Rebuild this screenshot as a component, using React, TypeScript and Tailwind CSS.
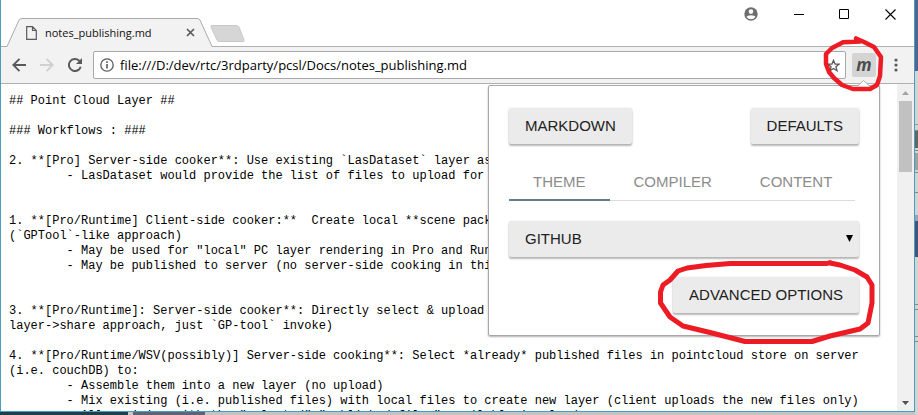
import React from "react";

const notes = `## Point Cloud Layer ##

### Workflows : ###

2. **[Pro] Server-side cooker**: Use existing \`LasDataset\` layer as
        - LasDataset would provide the list of files to upload for


1. **[Pro/Runtime] Client-side cooker:**  Create local **scene pack
(\`GPTool\`-like approach)
        - May be used for "local" PC layer rendering in Pro and Run
        - May be published to server (no server-side cooking in thi


3. **[Pro/Runtime]: Server-side cooker**: Directly select & upload
layer->share approach, just \`GP-tool\` invoke)

4. **[Pro/Runtime/WSV(possibly)] Server-side cooking**: Select *already* published files in pointcloud store on server
(i.e. couchDB) to:
        - Assemble them into a new layer (no upload)
        - Mix existing (i.e. published files) with local files to create new layer (client uploads the new files only)
        - Allow mixing with the "selected" "published files" available in cloud`;

const desktopBands: [string, string][] = [
  ["h-[71px]", "bg-[#53648a]"],
  ["h-[53px]", "bg-[#d3d3d3]"],
  ["h-px", "bg-[#9a9a9a]"],
  ["h-[5px]", "bg-[#d3d3d3]"],
  ["h-px", "bg-[#8a8a8a]"],
  ["h-[17px]", "bg-[#646464]"],
  ["h-[2px]", "bg-[#d3d3d3]"],
  ["h-px", "bg-[#8a8a8a]"],
  ["h-[2px]", "bg-[#d3d3d3]"],
  ["h-[17px]", "bg-[#a0a0a0]"],
  ["h-[2px]", "bg-[#d3d3d3]"],
  ["h-px", "bg-[#8a8a8a]"],
  ["h-[19px]", "bg-[#d3d3d3]"],
  ["h-px", "bg-[#8a8a8a]"],
  ["h-[22px]", "bg-[#d3d3d3]"],
  ["h-[6px]", "bg-[#9ba2b3]"],
  ["h-[36px]", "bg-[#445578]"],
  ["h-[47px]", "bg-[#d3d3d3]"],
  ["h-px", "bg-[#8a8a8a]"],
  ["h-[4px]", "bg-[#d3d3d3]"],
  ["h-px", "bg-[#8a8a8a]"],
  ["h-[26px]", "bg-[#d3d3d3]"],
  ["h-px", "bg-[#8a8a8a]"],
  ["h-[4px]", "bg-[#d3d3d3]"],
  ["h-px", "bg-[#8a8a8a]"],
];

const raised =
  "h-9 rounded-[2px] bg-[#ebebeb] px-4 text-[15px] leading-9 text-[#212121] shadow-[0_0_2px_rgba(0,0,0,0.12),0_2px_2px_rgba(0,0,0,0.28)]";

function TitleBar() {
  return (
    <header className="flex h-[46px] shrink-0 justify-between bg-white">
      <div className="flex items-end">
        <div className="relative z-10 -mb-px ml-[5px] h-[29px] w-[208px]">
          <svg className="absolute inset-0" width="208" height="29" viewBox="0 0 208 29" fill="none">
            <path d="M0 29 1 28.5 13 2Q14 .5 16 .5H191Q193 .5 194 2L206 28.5 208 29Z" fill="#f2f2f2" />
            <path d="M0 28.5H1L13 2Q14 .5 16 .5H191Q193 .5 194 2L206 28.5H208" stroke="#aaa" />
          </svg>
          <div className="relative flex h-[29px] items-center pl-5 pr-[18px]">
            <svg width="11" height="14" viewBox="0 0 11 14" fill="none" stroke="#5a5a5a" strokeWidth="1.2">
              <path d="M.7.7H6.5L10.3 4.5V13.3H.7ZM6.5.7V4.5H10.3" />
            </svg>
            <span className="ml-2 flex-1 font-['Open_Sans',sans-serif] text-[11px] leading-4 text-[#111]">notes_publishing.md</span>
            <button aria-label="Close tab" className="flex size-3 items-center justify-center">
              <svg width="9" height="9" viewBox="0 0 9 9" stroke="#5a5a5a" strokeWidth="1.7">
                <path d="M1 1 8 8M8 1 1 8" />
              </svg>
            </button>
          </div>
        </div>
        <button aria-label="New tab" className="mb-1 -ml-[4px]">
          <svg width="35" height="17" viewBox="0 0 35 17">
            <path d="M2 .5H26Q28 .5 29 2L34 15Q34.500 16.500 33 16.500H9Q7.500 16.500 7 15L1 2Q.5.5 2 .5Z" fill="#d6d6d6" stroke="#c8c8c8" />
          </svg>
        </button>
      </div>
      <div className="flex h-7 items-center">
        <button aria-label="Profile" className="mr-9">
          <svg width="14" height="14" viewBox="0 0 14 14">
            <circle cx="7" cy="7" r="6.700" fill="#6e6e6e" />
            <circle cx="7" cy="4.600" r="2.300" fill="#fff" />
            <path d="M2.600 10Q3 8.200 7 8.200T11.400 10Q9.800 12.300 7 12.300T2.600 10Z" fill="#fff" />
          </svg>
        </button>
        <button aria-label="Minimize" className="mr-[35px]">
          <svg width="10" height="10" viewBox="0 0 10 10" stroke="#000"><path d="M0 5.500H10" /></svg>
        </button>
        <button aria-label="Maximize" className="mr-9">
          <svg width="10" height="10" viewBox="0 0 10 10" fill="none" stroke="#000"><path d="M.5.5H9.500V9.500H.5Z" /></svg>
        </button>
        <button aria-label="Close" className="mr-[18px]">
          <svg width="11" height="11" viewBox="0 0 11 11" stroke="#000" strokeWidth="1.100"><path d="M.5.5 10.500 10.500M10.500.5.5 10.500" /></svg>
        </button>
      </div>
    </header>
  );
}

function Toolbar() {
  return (
    <nav className="flex h-[38px] shrink-0 items-center border-y border-[#b0b0b0] bg-[#f2f2f2] pl-[11px] pr-4">
      <button aria-label="Back" className="mr-[14px]">
        <svg width="14" height="14" viewBox="0 0 14 14" fill="none" stroke="#5a5a5a" strokeWidth="1.900"><path d="M14 7H1.500M7.500.8 1.300 7 7.500 13.200" /></svg>
      </button>
      <button aria-label="Forward" className="mr-[14px]">
        <svg width="14" height="14" viewBox="0 0 14 14" fill="none" stroke="#d0d0d0" strokeWidth="1.900"><path d="M0 7H12.500M6.500.8 12.700 7 6.500 13.200" /></svg>
      </button>
      <button aria-label="Reload" className="mr-[11px]">
        <svg width="14" height="14" viewBox="0 0 14 14" fill="none" stroke="#5a5a5a" strokeWidth="2"><path d="M12.700 8.700A6 6 0 1 1 11.200 2.800L12.500 4" /><path d="M14 0V6H8Z" fill="#5a5a5a" stroke="none" /></svg>
      </button>
      <div className="flex h-7 flex-1 items-center rounded-[2px] border border-[#a9a9a9] bg-white pl-[6px] pr-[5px]">
        <svg width="14" height="14" viewBox="0 0 14 14" fill="none" stroke="#5a5a5a">
          <circle cx="7" cy="7" r="6.200" strokeWidth="1.300" />
          <path d="M7 6V10.500M7 3.300V4.900" strokeWidth="1.600" />
        </svg>
        <input
          aria-label="Address"
          defaultValue="file:///D:/dev/rtc/3rdparty/pcsl/Docs/notes_publishing.md"
          className="ml-[6px] min-w-0 flex-1 bg-transparent font-['Open_Sans',sans-serif] text-[13px] leading-5 text-black outline-none"
        />
        <button aria-label="Bookmark this page">
          <svg width="13" height="13" viewBox="0 0 13 13" fill="none" stroke="#5a5a5a" strokeWidth="1.300">
            <path d="M6.500 1.300 8 5 12 5.200 8.900 7.700 10 11.700 6.500 9.500 3 11.700 4.100 7.700 1 5.200 5 5Z" />
          </svg>
        </button>
      </div>
      <button aria-label="Markdown Viewer" className="ml-[6px] h-6 w-6 rounded-[2px] bg-[#d4d4d4] text-center font-['Open_Sans',sans-serif] text-[17px] font-bold italic leading-5 text-[#4c4c4c]">
        m
      </button>
      <button aria-label="Menu" className="ml-[18px]">
        <svg width="4" height="14" viewBox="0 0 4 14" fill="#5a5a5a"><circle cx="2" cy="2" r="1.600" /><circle cx="2" cy="7" r="1.600" /><circle cx="2" cy="12" r="1.600" /></svg>
      </button>
    </nav>
  );
}

function Popup() {
  return (
    <section className="absolute right-[34px] top-px w-[392px] rounded-[2px] border border-[#a8a8a8] bg-white px-5 pb-[22px] pt-[22px] font-['Liberation_Sans',Arial,sans-serif] shadow-[0_1px_2px_rgba(0,0,0,0.3)]">
      <svg className="absolute -top-[6px] right-[9px]" width="13" height="7" viewBox="0 0 13 7">
        <path d="M0 7 6.500.5 13 7Z" fill="#fff" />
        <path d="M.5 6 6.500.5 12.500 6" fill="none" stroke="#b0b0b0" />
      </svg>
      <div className="flex justify-between">
        <button className={raised}>MARKDOWN</button>
        <button className={raised}>DEFAULTS</button>
      </div>
      <div role="tablist" className="mr-1 mt-5 flex h-[37px] border-b border-[#dcdcdc] text-[15px] leading-9 text-[#8c8c8c]">
        <button role="tab" aria-selected="true" className="h-[37px] border-b-2 border-[#607d8b] px-6">THEME</button>
        <button role="tab" aria-selected="false" className="px-6">COMPILER</button>
        <button role="tab" aria-selected="false" className="px-6">CONTENT</button>
      </div>
      <div className="relative mt-5">
        <select aria-label="Theme" className={"w-full appearance-none outline-none " + raised}>
          <option>GITHUB</option>
        </select>
        <svg className="pointer-events-none absolute right-[6px] top-[14px]" width="7" height="7" viewBox="0 0 7 7"><path d="M0 0H7L3.500 7Z" /></svg>
      </div>
      <div className="mt-5 flex justify-end">
        <button className={raised}>ADVANCED OPTIONS</button>
      </div>
    </section>
  );
}

function Scrollbar() {
  return (
    <div className="flex w-[17px] shrink-0 flex-col items-center bg-[#f0f0f0]">
      <svg className="shrink-0" width="17" height="17" viewBox="0 0 17 17"><path d="M5 11 8.500 7 12 11Z" fill="#a3a3a3" /></svg>
      <div className="h-[71px] w-[13px] bg-[#c1c1c1]" />
      <svg className="mt-auto shrink-0" width="17" height="17" viewBox="0 0 17 17"><path d="M5 7 8.500 11 12 7Z" fill="#505050" /></svg>
    </div>
  );
}

export default function App() {
  return (
    <div className="relative flex h-screen w-full overflow-hidden bg-[#d3d3d3]">
      <div className="flex min-w-0 flex-1 flex-col">
        <main className="flex min-h-0 flex-1 flex-col border-x border-b border-[#479fbd] bg-white">
          <TitleBar />
          <Toolbar />
          <div className="relative flex min-h-0 flex-1">
            <div className="flex min-w-0 flex-1 flex-col items-start overflow-hidden px-2 pt-[10px] font-['Liberation_Mono',monospace] text-[12px] leading-[15px] text-black">
              {notes.split("\n").map((line, i) => (
                <pre key={i} className="h-[15px] shrink-0 font-[inherit]">{line}</pre>
              ))}
            </div>
            <Scrollbar />
            <Popup />
          </div>
        </main>
        <div className="flex h-[3px] shrink-0">
          <div className="w-32 bg-[#1c3f4c]" />
          <div className="w-[5px] bg-[#c8c8c8]" />
          <div className="w-[72px] bg-[#5d6478]" />
          <div className="flex-1 bg-[#c4c4c4]" />
        </div>
      </div>
      <div className="w-[3px] shrink-0 overflow-hidden">
        {desktopBands.map(([height, color], i) => (
          <div key={i} className={height + " " + color} />
        ))}
      </div>
      <svg className="pointer-events-none absolute right-0 top-0" width="268" height="415" viewBox="650 0 268 415" fill="none" stroke="#ed1c24" strokeLinecap="round" strokeLinejoin="round">
        <path strokeWidth="4.500" d="M856 38.500 860 41.500 843 42.300 832 48 826 54V64L829 72 834 78 842 85 853 89H870L877 85 880 76 881 57 874 47 864 42 856 38.500" />
        <path strokeWidth="5" d="M830 262.500 827 263.500H730L706 265.500 687 268 678 271 670 280 663 285 660.500 292V303L670 317 683 326 710 332.500 745 341.500H812L830 336 860 329 868 323 872 303V285L867 277 855 270 840 265 830 263" />
      </svg>
    </div>
  );
}
